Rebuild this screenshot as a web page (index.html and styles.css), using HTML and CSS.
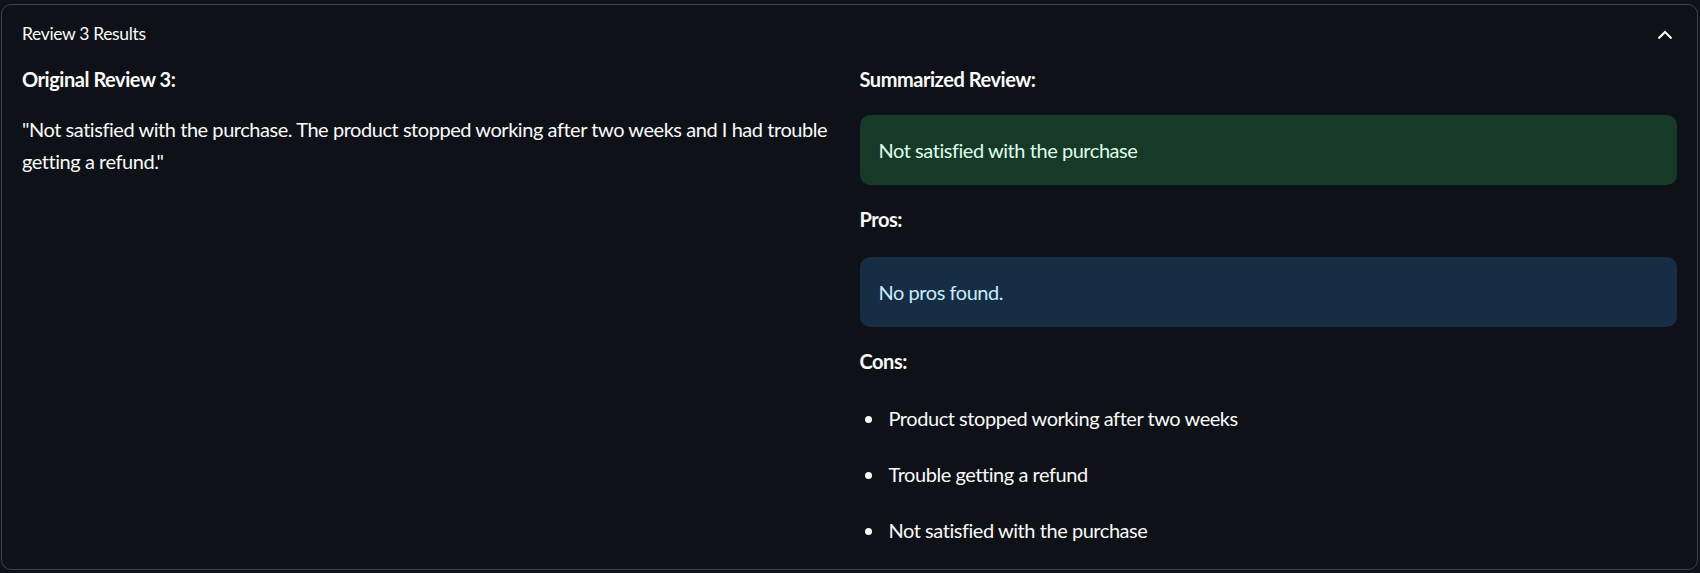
FILE: index.html
```html
<!DOCTYPE html>
<html lang="en">
<head>
<meta charset="utf-8">
<title>Review 3 Results</title>
<link rel="stylesheet" href="styles.css">
</head>
<body>
<details class="expander" open>
  <summary class="expander-head">
    <span class="expander-title">Review 3 Results</span>
    <svg class="chevron" width="14" height="9" viewBox="0 0 14 9" aria-hidden="true">
      <polyline points="1.2,7.8 7,2 12.8,7.8" fill="none" stroke="#fafafa" stroke-width="2.1" stroke-linecap="square"/>
    </svg>
  </summary>
  <div class="expander-body">
    <div class="col">
      <p class="heading">Original Review 3:</p>
      <p class="text gap-a">"Not satisfied with the purchase. The product stopped working after two weeks and I had trouble getting a refund."</p>
    </div>
    <div class="col">
      <p class="heading">Summarized Review:</p>
      <div class="alert success gap-b">Not satisfied with the purchase</div>
      <p class="heading gap-c">Pros:</p>
      <div class="alert info gap-d">No pros found.</div>
      <p class="heading gap-c">Cons:</p>
      <ul class="cons">
        <li>Product stopped working after two weeks</li>
        <li>Trouble getting a refund</li>
        <li>Not satisfied with the purchase</li>
      </ul>
    </div>
  </div>
</details>
</body>
</html>
```
FILE: styles.css
```css
html, body {
  margin: 0;
  padding: 0;
  background: #0e1117;
}
body {
  padding: 4px 2px 0 1px;
  font-family: "Lato", "Noto Sans", sans-serif;
  color: #fafafa;
}
.expander {
  border: 1px solid rgba(250, 250, 250, 0.2);
  border-radius: 10px;
}
.expander-head {
  list-style: none;
  display: flex;
  align-items: center;
  justify-content: space-between;
  padding: 15px 25px 15px 20px;
  cursor: pointer;
}
.expander-head::-webkit-details-marker { display: none; }
.expander-title {
  font-size: 17.5px;
  line-height: 28px;
  letter-spacing: -0.35px;
}
.chevron { display: block; }
.expander-body {
  display: grid;
  grid-template-columns: 1fr 1fr;
  column-gap: 20px;
  padding: 0 20px 23px 20px;
}
.col {
  display: flex;
  flex-direction: column;
  letter-spacing: -0.45px;
}
p { margin: 0; }
.heading {
  font-weight: 700;
  font-size: 20px;
  line-height: 32px;
}
.text {
  font-size: 20px;
  line-height: 32px;
}
.gap-a { margin-top: 18px; }
.gap-b { margin-top: 20px; }
.gap-c { margin-top: 18px; }
.gap-d { margin-top: 22px; }
.alert {
  font-size: 20px;
  line-height: 32px;
  padding: 19px 19px;
  border-radius: 10px;
}
.success {
  background: #173928;
  color: #dffde9;
}
.info {
  background: #172d43;
  color: #c7ebff;
}
.cons {
  margin: 25px 0 0 0;
  padding: 0 0 0 25px;
  display: flex;
  flex-direction: column;
  gap: 24px;
  font-size: 20px;
  line-height: 32px;
}
.cons li { padding-left: 4px; }
```
